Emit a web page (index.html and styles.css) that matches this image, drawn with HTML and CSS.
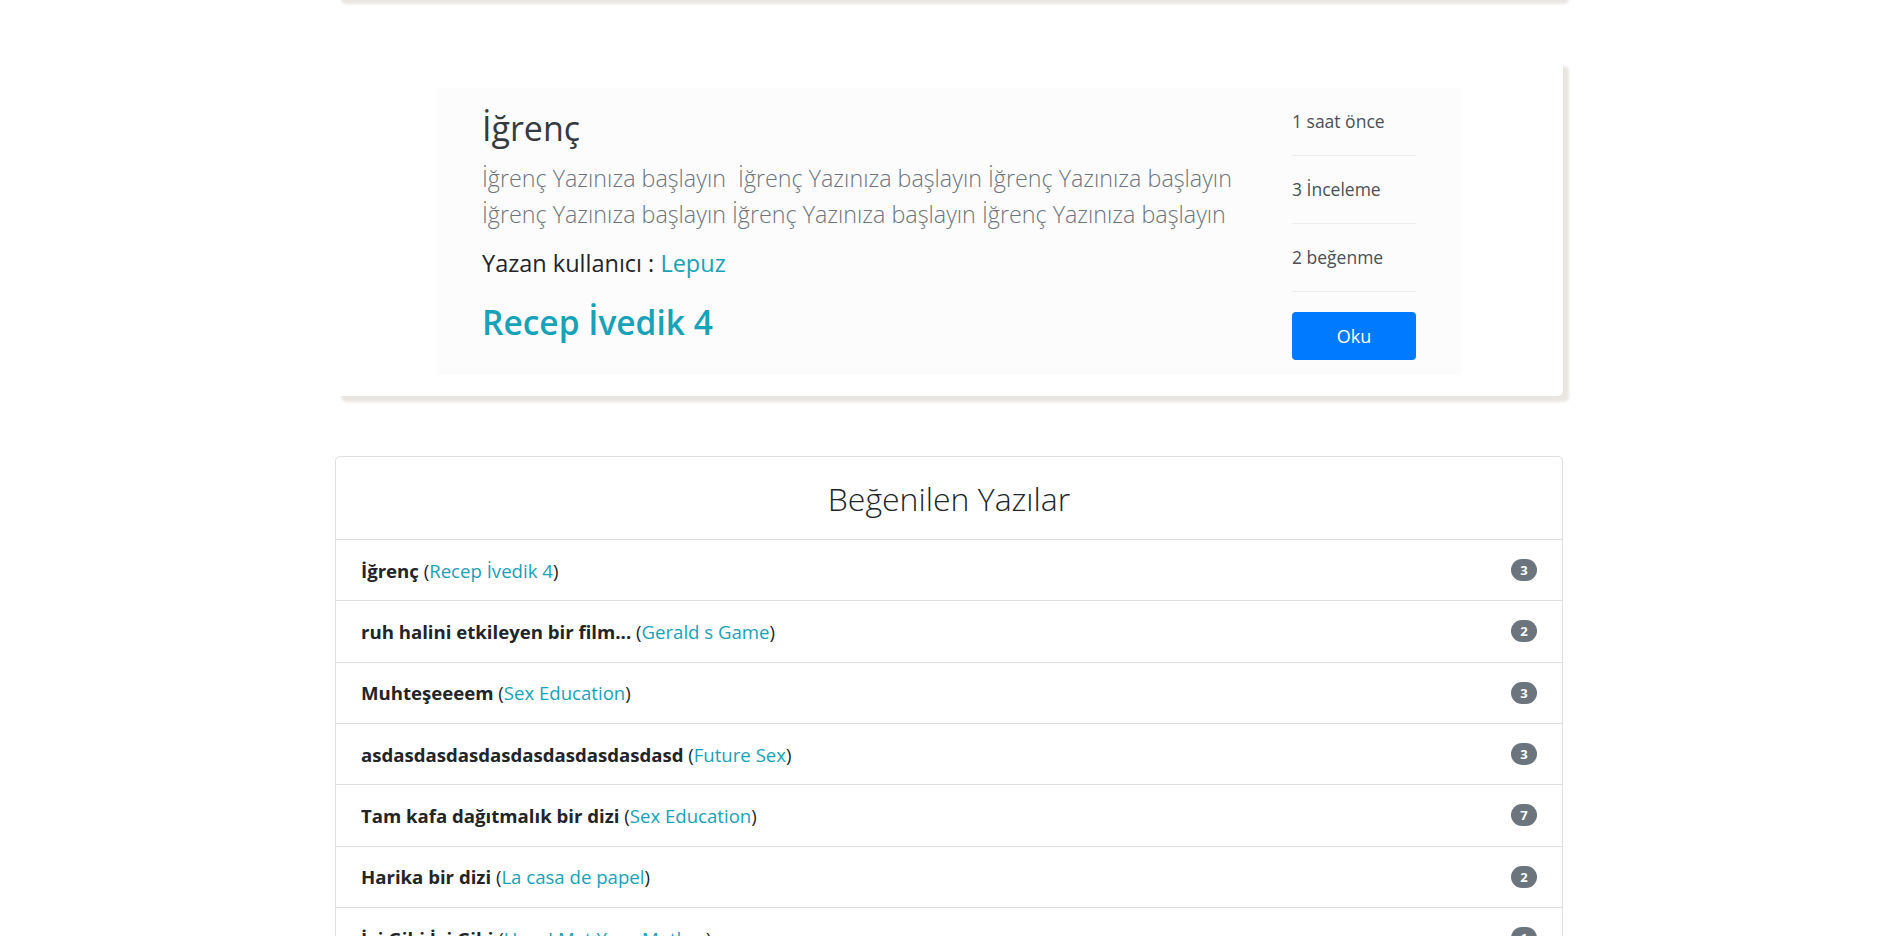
FILE: index.html
```html
<!DOCTYPE html>
<html lang="tr">
<head>
<meta charset="utf-8">
<title>Yazılar</title>
<link rel="stylesheet" href="styles.css">
</head>
<body>
<div class="page">
  <div class="card prev-card"></div>

  <div class="card feature-card">
    <div class="feature-panel">
      <div class="feature-main">
        <h2 class="feature-title">İğrenç</h2>
        <p class="feature-lead">İğrenç Yazınıza başlayın&nbsp; İğrenç Yazınıza başlayın İğrenç Yazınıza başlayın İğrenç Yazınıza başlayın İğrenç Yazınıza başlayın İğrenç Yazınıza başlayın</p>
        <p class="feature-author">Yazan kullanıcı : <a class="link" href="#">Lepuz</a></p>
        <h3 class="feature-movie"><a class="link" href="#">Recep İvedik 4</a></h3>
      </div>
      <div class="feature-side">
        <ul class="stats">
          <li class="stat">1 saat önce</li>
          <li class="stat">3 İnceleme</li>
          <li class="stat">2 beğenme</li>
        </ul>
        <a class="btn-read" href="#">Oku</a>
      </div>
    </div>
  </div>

  <div class="list-card">
    <div class="list-header">Beğenilen Yazılar</div>
    <ul class="list">
      <li class="list-row"><span><b>İğrenç</b> (<a class="link" href="#">Recep İvedik 4</a>)</span><span class="badge">3</span></li>
      <li class="list-row"><span><b>ruh halini etkileyen bir film...</b> (<a class="link" href="#">Gerald s Game</a>)</span><span class="badge">2</span></li>
      <li class="list-row"><span><b>Muhteşeeeem</b> (<a class="link" href="#">Sex Education</a>)</span><span class="badge">3</span></li>
      <li class="list-row"><span><b>asdasdasdasdasdasdasdasdasdasd</b> (<a class="link" href="#">Future Sex</a>)</span><span class="badge">3</span></li>
      <li class="list-row"><span><b>Tam kafa dağıtmalık bir dizi</b> (<a class="link" href="#">Sex Education</a>)</span><span class="badge">7</span></li>
      <li class="list-row"><span><b>Harika bir dizi</b> (<a class="link" href="#">La casa de papel</a>)</span><span class="badge">2</span></li>
      <li class="list-row"><span><b>İyi Gibi İyi Gibi</b> (<a class="link" href="#">How I Met Your Mother</a>)</span><span class="badge">1</span></li>
    </ul>
  </div>
</div>
</body>
</html>
```
FILE: styles.css
```css
* { box-sizing: border-box; }

html, body {
  margin: 0;
  padding: 0;
  background: #ffffff;
  overflow: hidden;
}

body {
  font-family: "Open Sans", "Noto Sans", "Liberation Sans", sans-serif;
  color: #212529;
}

.page {
  width: 1228px;
  margin-left: 335px;
}

.card {
  background: #ffffff;
  border-radius: 5px;
  box-shadow: 6px 6px 3px #e9e6e2;
}

.prev-card {
  height: 40px;
  margin-top: -42px;
}

.feature-card {
  margin-top: 62px;
  padding: 28px 0 21px;
}

.feature-panel {
  width: 1024px;
  margin: 0 auto;
  background: #fcfcfc;
  padding: 0 45px 15px;
  display: flex;
  gap: 45px;
}

.feature-main {
  flex: 1;
  padding-top: 20px;
}

.feature-title {
  margin: 0;
  font-size: 34px;
  font-weight: 400;
  line-height: 40px;
  color: #343a40;
}

.feature-lead {
  margin: 12px 0 0;
  font-size: 23.3px;
  font-weight: 300;
  line-height: 36px;
  color: #6c757d;
}

.feature-author {
  margin: 15px 0 0;
  font-size: 23.5px;
  line-height: 32px;
  color: #212529;
}

.feature-movie {
  margin: 23px 0 0;
  font-size: 33.5px;
  font-weight: 600;
  line-height: 40px;
}

.link {
  color: #17a2b8;
  text-decoration: none;
}

.feature-side {
  width: 124px;
  flex: none;
  display: flex;
  flex-direction: column;
}

.stats {
  list-style: none;
  margin: 0;
  padding: 0;
}

.stat {
  padding: 21px 0 22px;
  line-height: 24px;
  font-size: 17.5px;
  color: #495057;
  border-bottom: 1px solid #ececf0;
  white-space: nowrap;
}

.btn-read {
  margin-top: 20px;
  height: 48px;
  display: flex;
  align-items: center;
  justify-content: center;
  background: #007bff;
  color: #ffffff;
  border-radius: 4px;
  font-size: 18px;
  text-decoration: none;
}

.list-card {
  margin-top: 60px;
  border: 1px solid #dfdfdf;
  border-radius: 5px;
  background: #ffffff;
}

.list-header {
  height: 83px;
  display: flex;
  align-items: center;
  justify-content: center;
  font-size: 32px;
  font-weight: 300;
  color: #212529;
  border-bottom: 1px solid #dfdfdf;
}

.list {
  list-style: none;
  margin: 0;
  padding: 0;
}

.list-row {
  height: 61.33px;
  padding: 0 25px 0 25px;
  display: flex;
  align-items: center;
  justify-content: space-between;
  font-size: 18.6px;
  color: #212529;
  border-bottom: 1px solid #dfdfdf;
}

.list-row b {
  font-weight: 700;
  color: #212529;
}

.badge {
  min-width: 26px;
  height: 22px;
  padding: 0 8px;
  border-radius: 11px;
  background: #6c757d;
  color: #ffffff;
  font-size: 13px;
  font-weight: 700;
  display: flex;
  align-items: center;
  justify-content: center;
}
```
